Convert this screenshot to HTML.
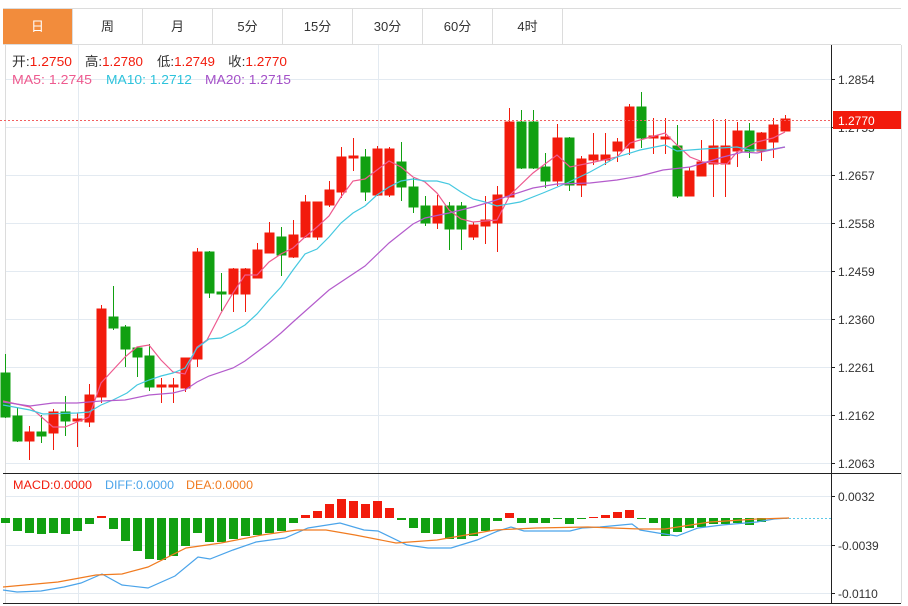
<!DOCTYPE html>
<html><head><meta charset="utf-8"><style>
*{margin:0;padding:0;box-sizing:border-box}
body{width:908px;height:606px;background:#fff;font-family:"Liberation Sans","Noto Sans CJK SC",sans-serif;overflow:hidden;position:relative}
.tabs{position:absolute;left:3px;top:8px;width:898px;height:37px;border-top:1px solid #dcdcdc;border-bottom:1px solid #dcdcdc;display:flex}
.tab{width:70px;height:35px;line-height:35px;text-align:center;font-size:13px;color:#333;border-right:1px solid #dcdcdc}
.tab.on{background:#f28c3c;color:#fff}
svg{position:absolute;left:0;top:0}
</style></head><body>
<div class="tabs"><div class="tab on">日</div><div class="tab">周</div><div class="tab">月</div><div class="tab">5分</div><div class="tab">15分</div><div class="tab">30分</div><div class="tab">60分</div><div class="tab">4时</div></div>
<svg width="908" height="606" viewBox="0 0 908 606" font-family="Liberation Sans, Noto Sans CJK SC, sans-serif">
<g stroke="#e3eaf1" stroke-width="1">
<line x1="5" y1="79.5" x2="831" y2="79.5"/><line x1="5" y1="127.5" x2="831" y2="127.5"/><line x1="5" y1="175.5" x2="831" y2="175.5"/><line x1="5" y1="223.5" x2="831" y2="223.5"/><line x1="5" y1="271.5" x2="831" y2="271.5"/><line x1="5" y1="319.5" x2="831" y2="319.5"/><line x1="5" y1="367.5" x2="831" y2="367.5"/><line x1="5" y1="415.5" x2="831" y2="415.5"/><line x1="5" y1="463.5" x2="831" y2="463.5"/>
<line x1="5" y1="496.5" x2="831" y2="496.5"/><line x1="5" y1="545.5" x2="831" y2="545.5"/><line x1="5" y1="593.5" x2="831" y2="593.5"/>
<line x1="78.5" y1="45" x2="78.5" y2="603"/><line x1="378.5" y1="45" x2="378.5" y2="603"/>
</g>
<line x1="5.5" y1="45" x2="5.5" y2="603" stroke="#dcdcdc"/>
<line x1="901.5" y1="45" x2="901.5" y2="603" stroke="#dcdcdc"/>
<line x1="3" y1="473.5" x2="901" y2="473.5" stroke="#222"/>
<line x1="3" y1="603.5" x2="901" y2="603.5" stroke="#222"/>
<line x1="831.5" y1="45" x2="831.5" y2="604" stroke="#222"/>
<g stroke="#222"><line x1="831" y1="79.5" x2="835" y2="79.5"/><line x1="831" y1="127.5" x2="835" y2="127.5"/><line x1="831" y1="175.5" x2="835" y2="175.5"/><line x1="831" y1="223.5" x2="835" y2="223.5"/><line x1="831" y1="271.5" x2="835" y2="271.5"/><line x1="831" y1="319.5" x2="835" y2="319.5"/><line x1="831" y1="367.5" x2="835" y2="367.5"/><line x1="831" y1="415.5" x2="835" y2="415.5"/><line x1="831" y1="463.5" x2="835" y2="463.5"/><line x1="831" y1="496.5" x2="835" y2="496.5"/><line x1="831" y1="545.5" x2="835" y2="545.5"/><line x1="831" y1="593.5" x2="835" y2="593.5"/></g>
<g font-size="12" fill="#333">
<text x="838" y="84">1.2854</text><text x="838" y="132">1.2755</text><text x="838" y="180">1.2657</text><text x="838" y="228">1.2558</text><text x="838" y="276">1.2459</text><text x="838" y="324">1.2360</text><text x="838" y="372">1.2261</text><text x="838" y="420">1.2162</text><text x="838" y="468">1.2063</text>
<text x="838" y="501">0.0032</text><text x="838" y="550">-0.0039</text><text x="838" y="598">-0.0110</text>
</g>
<g stroke="#f21b0c" fill="#f21b0c" stroke-width="1">
<line x1="29.5" y1="426" x2="29.5" y2="460"/><rect x="25" y="432" width="9" height="9"/>
<line x1="53.5" y1="409" x2="53.5" y2="450"/><rect x="49" y="412" width="9" height="21"/>
<line x1="77.5" y1="413" x2="77.5" y2="447"/><rect x="73" y="419" width="9" height="2"/>
<line x1="89.5" y1="384" x2="89.5" y2="427"/><rect x="85" y="395" width="9" height="27"/>
<line x1="101.5" y1="305" x2="101.5" y2="403"/><rect x="97" y="309" width="9" height="88"/>
<line x1="161.5" y1="378" x2="161.5" y2="403"/><rect x="157" y="385" width="9" height="2"/>
<line x1="173.5" y1="378" x2="173.5" y2="403"/><rect x="169" y="385" width="9" height="2"/>
<line x1="185.5" y1="358" x2="185.5" y2="392"/><rect x="181" y="358" width="9" height="30"/>
<line x1="197.5" y1="248" x2="197.5" y2="367"/><rect x="193" y="252" width="9" height="107"/>
<line x1="233.5" y1="268" x2="233.5" y2="312"/><rect x="229" y="269" width="9" height="25"/>
<line x1="245.5" y1="268" x2="245.5" y2="312"/><rect x="241" y="269" width="9" height="25"/>
<line x1="257.5" y1="243" x2="257.5" y2="278"/><rect x="253" y="250" width="9" height="28"/>
<line x1="269.5" y1="222" x2="269.5" y2="253"/><rect x="265" y="233" width="9" height="20"/>
<line x1="293.5" y1="220" x2="293.5" y2="258"/><rect x="289" y="235" width="9" height="22"/>
<line x1="305.5" y1="195" x2="305.5" y2="238"/><rect x="301" y="202" width="9" height="35"/>
<line x1="317.5" y1="202" x2="317.5" y2="240"/><rect x="313" y="202" width="9" height="35"/>
<line x1="329.5" y1="181" x2="329.5" y2="207"/><rect x="325" y="190" width="9" height="15"/>
<line x1="341.5" y1="147" x2="341.5" y2="198"/><rect x="337" y="157" width="9" height="35"/>
<line x1="353.5" y1="138" x2="353.5" y2="171"/><rect x="349" y="156" width="9" height="2"/>
<line x1="377.5" y1="146" x2="377.5" y2="196"/><rect x="373" y="149" width="9" height="46"/>
<line x1="389.5" y1="147" x2="389.5" y2="197"/><rect x="385" y="149" width="9" height="46"/>
<line x1="437.5" y1="195" x2="437.5" y2="229"/><rect x="433" y="206" width="9" height="17"/>
<line x1="473.5" y1="222" x2="473.5" y2="240"/><rect x="469" y="225" width="9" height="12"/>
<line x1="485.5" y1="196" x2="485.5" y2="244"/><rect x="481" y="220" width="9" height="6"/>
<line x1="497.5" y1="186" x2="497.5" y2="252"/><rect x="493" y="195" width="9" height="28"/>
<line x1="509.5" y1="108" x2="509.5" y2="197"/><rect x="505" y="122" width="9" height="75"/>
<line x1="557.5" y1="124" x2="557.5" y2="186"/><rect x="553" y="138" width="9" height="43"/>
<line x1="581.5" y1="156" x2="581.5" y2="197"/><rect x="577" y="159" width="9" height="26"/>
<line x1="593.5" y1="133" x2="593.5" y2="165"/><rect x="589" y="155" width="9" height="5"/>
<line x1="605.5" y1="133" x2="605.5" y2="165"/><rect x="601" y="155" width="9" height="5"/>
<line x1="617.5" y1="138" x2="617.5" y2="162"/><rect x="613" y="142" width="9" height="9"/>
<line x1="629.5" y1="104" x2="629.5" y2="155"/><rect x="625" y="107" width="9" height="41"/>
<line x1="653.5" y1="118" x2="653.5" y2="154"/><rect x="649" y="136" width="9" height="2"/>
<line x1="665.5" y1="118" x2="665.5" y2="154"/><rect x="661" y="137" width="9" height="2"/>
<line x1="689.5" y1="167" x2="689.5" y2="196"/><rect x="685" y="171" width="9" height="25"/>
<line x1="701.5" y1="140" x2="701.5" y2="176"/><rect x="697" y="162" width="9" height="14"/>
<line x1="713.5" y1="119" x2="713.5" y2="197"/><rect x="709" y="146" width="9" height="18"/>
<line x1="725.5" y1="119" x2="725.5" y2="197"/><rect x="721" y="146" width="9" height="18"/>
<line x1="737.5" y1="122" x2="737.5" y2="167"/><rect x="733" y="131" width="9" height="20"/>
<line x1="761.5" y1="132" x2="761.5" y2="161"/><rect x="757" y="133" width="9" height="18"/>
<line x1="773.5" y1="118" x2="773.5" y2="158"/><rect x="769" y="125" width="9" height="17"/>
<line x1="785.5" y1="115" x2="785.5" y2="131"/><rect x="781" y="119" width="9" height="12"/>
</g>
<g stroke="#11a011" fill="#11a011" stroke-width="1">
<line x1="5.5" y1="354" x2="5.5" y2="418"/><rect x="1" y="373" width="9" height="44"/>
<line x1="17.5" y1="408" x2="17.5" y2="442"/><rect x="13" y="416" width="9" height="25"/>
<line x1="41.5" y1="415" x2="41.5" y2="443"/><rect x="37" y="432" width="9" height="4"/>
<line x1="65.5" y1="396" x2="65.5" y2="436"/><rect x="61" y="412" width="9" height="9"/>
<line x1="113.5" y1="286" x2="113.5" y2="330"/><rect x="109" y="317" width="9" height="11"/>
<line x1="125.5" y1="325" x2="125.5" y2="367"/><rect x="121" y="327" width="9" height="22"/>
<line x1="137.5" y1="347" x2="137.5" y2="377"/><rect x="133" y="348" width="9" height="9"/>
<line x1="149.5" y1="344" x2="149.5" y2="391"/><rect x="145" y="356" width="9" height="31"/>
<line x1="209.5" y1="251" x2="209.5" y2="298"/><rect x="205" y="252" width="9" height="41"/>
<line x1="221.5" y1="273" x2="221.5" y2="311"/><rect x="217" y="292" width="9" height="2"/>
<line x1="281.5" y1="227" x2="281.5" y2="276"/><rect x="277" y="237" width="9" height="18"/>
<line x1="365.5" y1="149" x2="365.5" y2="201"/><rect x="361" y="157" width="9" height="35"/>
<line x1="401.5" y1="142" x2="401.5" y2="201"/><rect x="397" y="162" width="9" height="25"/>
<line x1="413.5" y1="178" x2="413.5" y2="213"/><rect x="409" y="187" width="9" height="20"/>
<line x1="425.5" y1="196" x2="425.5" y2="226"/><rect x="421" y="206" width="9" height="17"/>
<line x1="449.5" y1="202" x2="449.5" y2="250"/><rect x="445" y="206" width="9" height="23"/>
<line x1="461.5" y1="202" x2="461.5" y2="250"/><rect x="457" y="206" width="9" height="23"/>
<line x1="521.5" y1="110" x2="521.5" y2="169"/><rect x="517" y="122" width="9" height="46"/>
<line x1="533.5" y1="110" x2="533.5" y2="169"/><rect x="529" y="122" width="9" height="46"/>
<line x1="545.5" y1="153" x2="545.5" y2="188"/><rect x="541" y="167" width="9" height="14"/>
<line x1="569.5" y1="137" x2="569.5" y2="191"/><rect x="565" y="138" width="9" height="47"/>
<line x1="641.5" y1="92" x2="641.5" y2="148"/><rect x="637" y="107" width="9" height="31"/>
<line x1="677.5" y1="125" x2="677.5" y2="198"/><rect x="673" y="146" width="9" height="50"/>
<line x1="749.5" y1="123" x2="749.5" y2="158"/><rect x="745" y="131" width="9" height="20"/>
</g>
<g fill="none" stroke-width="1.2">
<polyline stroke="#ee5a8f" points="3,401 30,407 53,427 65,427 77,422 89,417 101,383 113,370 125,357 137,347 149,345 161,360 173,372 185,374 197,347 207,340 221,313 233,293 245,275 257,275 269,262 281,254 293,248 305,237 317,227 329,216 341,197 353,181 365,179 377,170 389,161 401,167 413,177 425,182 437,193 449,210 461,219 473,222 485,221 497,220 510,195 533,173 557,155 570,167 590,163 617,157 630,143 647,138 665,133 677,145 690,157 703,162 727,164 737,152 757,142 773,138 785,132"/>
<polyline stroke="#45c8e0" points="3,405 30,410 43,414 77,413 89,412 101,405 113,400 127,393 137,385 149,380 161,376 173,373 185,368 197,348 209,339 221,338 233,332 245,325 257,314 269,300 281,287 293,270 305,254 317,249 329,237 341,223 353,213 365,206 377,195 389,187 401,181 413,179 425,181 437,181 449,184 461,192 473,199 485,202 497,206 520,202 543,193 567,183 590,172 617,157 640,150 665,145 677,151 703,149 737,147 750,150 767,150 785,147"/>
<polyline stroke="#b45ccc" points="3,402 30,406 53,403 77,403 101,401 125,400 149,395 173,393 185,390 197,382 209,376 233,368 245,361 257,352 269,343 281,333 293,322 329,290 365,266 389,243 413,224 425,218 449,213 473,207 490,202 533,188 557,184 590,183 617,180 640,176 663,170 690,167 723,157 743,152 757,153 785,147"/>
</g>
<line x1="0" y1="120.5" x2="831" y2="120.5" stroke="#f26060" stroke-dasharray="2,2"/>
<rect x="833" y="111" width="68" height="18" fill="#f21b0c"/>
<text x="838" y="125" font-size="12" fill="#fff">1.2770</text>
<g font-size="13">
<text x="12" y="66" textLength="60" lengthAdjust="spacingAndGlyphs"><tspan fill="#333">开:</tspan><tspan fill="#f21b0c">1.2750</tspan></text>
<text x="85" y="66" textLength="58" lengthAdjust="spacingAndGlyphs"><tspan fill="#333">高:</tspan><tspan fill="#f21b0c">1.2780</tspan></text>
<text x="157" y="66" textLength="58" lengthAdjust="spacingAndGlyphs"><tspan fill="#333">低:</tspan><tspan fill="#f21b0c">1.2749</tspan></text>
<text x="228" y="66" textLength="59" lengthAdjust="spacingAndGlyphs"><tspan fill="#333">收:</tspan><tspan fill="#f21b0c">1.2770</tspan></text>
<text x="12" y="84" fill="#ee5a8f" textLength="80" lengthAdjust="spacingAndGlyphs">MA5: 1.2745</text>
<text x="106" y="84" fill="#2ec3dc" textLength="86" lengthAdjust="spacingAndGlyphs">MA10: 1.2712</text>
<text x="205" y="84" fill="#a450c8" textLength="86" lengthAdjust="spacingAndGlyphs">MA20: 1.2715</text>
</g>
<g font-size="12">
<text x="13" y="489" fill="#f21b0c" textLength="79" lengthAdjust="spacingAndGlyphs">MACD:0.0000</text>
<text x="105" y="489" fill="#4ba4ea" textLength="69" lengthAdjust="spacingAndGlyphs">DIFF:0.0000</text>
<text x="186" y="489" fill="#f07b20" textLength="67" lengthAdjust="spacingAndGlyphs">DEA:0.0000</text>
</g>
<g fill="#11a011">
<rect x="1" y="518" width="9" height="5"/><rect x="13" y="518" width="9" height="13"/><rect x="25" y="518" width="9" height="15"/><rect x="37" y="518" width="9" height="16"/><rect x="49" y="518" width="9" height="15"/><rect x="61" y="518" width="9" height="16"/><rect x="73" y="518" width="9" height="13"/><rect x="85" y="518" width="9" height="6"/>
<rect x="109" y="518" width="9" height="11"/><rect x="121" y="518" width="9" height="23"/><rect x="133" y="518" width="9" height="33"/><rect x="145" y="518" width="9" height="41"/><rect x="157" y="518" width="9" height="42"/><rect x="169" y="518" width="9" height="38"/><rect x="181" y="518" width="9" height="28"/><rect x="193" y="518" width="9" height="15"/><rect x="205" y="518" width="9" height="24"/><rect x="217" y="518" width="9" height="24"/><rect x="229" y="518" width="9" height="21"/><rect x="241" y="518" width="9" height="18"/><rect x="253" y="518" width="9" height="17"/><rect x="265" y="518" width="9" height="15"/><rect x="277" y="518" width="9" height="13"/><rect x="289" y="518" width="9" height="5"/>
<rect x="397" y="518" width="9" height="2"/><rect x="409" y="518" width="9" height="10"/><rect x="421" y="518" width="9" height="15"/><rect x="433" y="518" width="9" height="16"/><rect x="445" y="518" width="9" height="21"/><rect x="457" y="518" width="9" height="21"/><rect x="469" y="518" width="9" height="18"/><rect x="481" y="518" width="9" height="13"/><rect x="493" y="518" width="9" height="3"/>
<rect x="517" y="518" width="9" height="5"/><rect x="529" y="518" width="9" height="5"/><rect x="541" y="518" width="9" height="5"/><rect x="553" y="518" width="9" height="1"/><rect x="565" y="518" width="9" height="6"/><rect x="577" y="518" width="9" height="1"/>
<rect x="637" y="518" width="9" height="1"/><rect x="649" y="518" width="9" height="5"/><rect x="661" y="518" width="9" height="18"/><rect x="673" y="518" width="9" height="14"/><rect x="685" y="518" width="9" height="10"/><rect x="697" y="518" width="9" height="9"/><rect x="709" y="518" width="9" height="6"/><rect x="721" y="518" width="9" height="6"/><rect x="733" y="518" width="9" height="5"/><rect x="745" y="518" width="9" height="7"/><rect x="757" y="518" width="9" height="4"/><rect x="769" y="518" width="9" height="1"/>
</g>
<g fill="#f21b0c">
<rect x="97" y="516" width="9" height="2"/>
<rect x="301" y="515" width="9" height="3"/><rect x="313" y="511" width="9" height="7"/><rect x="325" y="504" width="9" height="14"/><rect x="337" y="499" width="9" height="19"/><rect x="349" y="501" width="9" height="17"/><rect x="361" y="504" width="9" height="14"/><rect x="373" y="501" width="9" height="17"/><rect x="385" y="508" width="9" height="10"/>
<rect x="505" y="513" width="9" height="5"/><rect x="589" y="517" width="9" height="1"/><rect x="601" y="515" width="9" height="3"/><rect x="613" y="512" width="9" height="6"/><rect x="625" y="510" width="9" height="8"/>
</g>
<line x1="785" y1="518.5" x2="831" y2="518.5" stroke="#5cc8e8" stroke-dasharray="2,2"/>
<g fill="none" stroke-width="1.2">
<polyline stroke="#4ba4ea" points="3,590 17,592 41,591 64,587 81,583 102,574 122,585 148,588 175,576 198,557 210,559 233,550 256,542 285,538 308,528 340,523 364,530 378,531 407,545 428,548 451,548 477,540 498,531 511,527 524,531 547,531 570,531 582,528 600,527 632,524 640,530 658,533 677,536 698,528 722,525 757,522 774,519 789,518"/>
<polyline stroke="#f07b20" points="3,587 58,582 96,575 122,574 148,567 186,548 221,543 262,535 297,530 326,530 355,535 396,543 437,540 495,530 536,528 588,527 640,529 665,529 710,522 757,519 789,518"/>
</g>
</svg>
</body></html>
